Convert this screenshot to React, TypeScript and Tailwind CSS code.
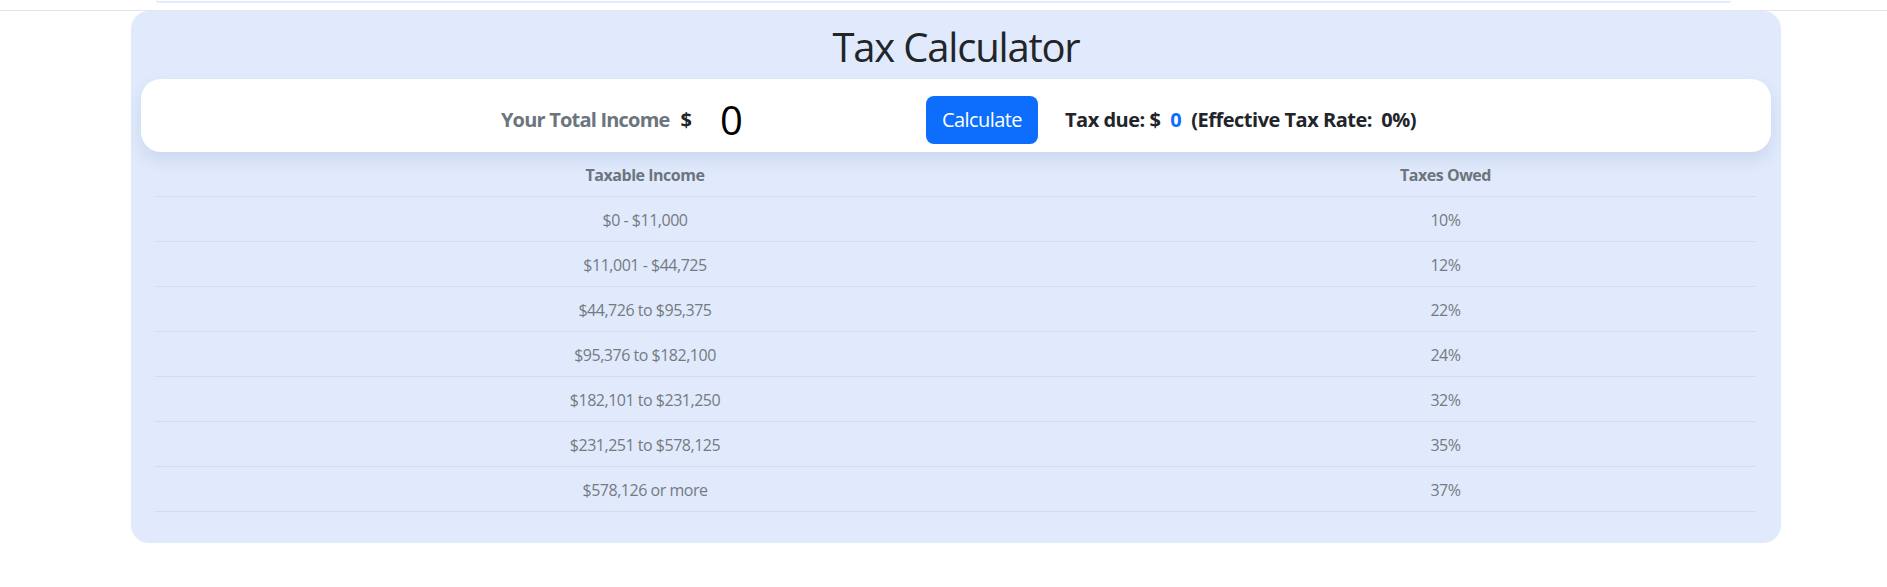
import React, { useState } from 'react';

const brackets: { range: string; rate: number; from: number; to: number }[] = [
  { range: '$0 - $11,000', rate: 10, from: 0, to: 11000 },
  { range: '$11,001 - $44,725', rate: 12, from: 11000, to: 44725 },
  { range: '$44,726 to $95,375', rate: 22, from: 44725, to: 95375 },
  { range: '$95,376 to $182,100', rate: 24, from: 95375, to: 182100 },
  { range: '$182,101 to $231,250', rate: 32, from: 182100, to: 231250 },
  { range: '$231,251 to $578,125', rate: 35, from: 231250, to: 578125 },
  { range: '$578,126 or more', rate: 37, from: 578125, to: Infinity },
];

const font = { fontFamily: '"Open Sans", "Noto Sans", sans-serif' };

function computeTax(income: number) {
  let tax = 0;
  for (const b of brackets) {
    if (income > b.from) {
      tax += (Math.min(income, b.to) - b.from) * (b.rate / 100);
    }
  }
  return Math.round(tax);
}

export default function App() {
  const [income, setIncome] = useState('0');
  const [taxDue, setTaxDue] = useState(0);
  const [rate, setRate] = useState(0);

  const handleCalculate = () => {
    const value = Number(income) || 0;
    const tax = computeTax(value);
    setTaxDue(tax);
    setRate(value > 0 ? Math.round((tax / value) * 10000) / 100 : 0);
  };

  return (
    <div className="min-h-[587px] bg-white" style={font}>
      <div className="mx-[156px] h-[3px] rounded-b-md border-b-2 border-[#e3eaf8] bg-white" />
      <div className="mt-[7px] border-t border-[#e3e5e8]" />

      <div className="ml-[131px] w-[1650px] rounded-[18px] bg-[#e0eafc] pt-[12px] pb-[31px]">
        <h1 className="mb-[8px] h-[48px] text-center text-[40px] leading-[48px] font-normal tracking-[-0.03em] text-[#212529]">
          Tax Calculator
        </h1>

        <div className="mx-[10px] flex items-center justify-center rounded-[20px] bg-white pt-[17px] pb-[8px] shadow-[0_0.5rem_1rem_rgba(60,80,140,0.12)]">
          <span className="ml-[5px] text-[20px] leading-[30px] font-bold tracking-[-0.04em] text-[#6c757d]">
            Your Total Income
          </span>
          <span className="ml-[11px] text-[20px] leading-[30px] font-bold text-[#212529]">$</span>
          <input
            value={income}
            onChange={(e) => setIncome(e.target.value)}
            className="ml-[16px] h-[48px] w-[206px] border-0 bg-transparent pl-[12px] text-[40px] leading-[48px] text-black outline-none"
          />
          <button
            onClick={handleCalculate}
            className="ml-[12px] h-[48px] w-[112px] rounded-lg bg-[#0d6efd] text-[20px] leading-[30px] tracking-[-0.03em] text-white"
          >
            Calculate
          </button>
          <span className="ml-[27px] text-[20px] leading-[30px] font-bold tracking-[-0.025em] text-[#212529] whitespace-pre">
            Tax due: $
            <span className="mr-[10px] ml-[10px] text-[#0d6efd]">{taxDue}</span>
            {`(Effective Tax Rate:  ${rate}%)`}
          </span>
        </div>

        <div className="mr-[25px] ml-[24px]">
          <table className="w-full border-separate border-spacing-0 text-center text-[16px] leading-6">
            <colgroup>
              <col className="w-[980px]" />
              <col />
            </colgroup>
            <thead>
              <tr>
                <th className="border-b border-[#d6dce6] pt-[11px] pb-[9px] font-bold tracking-[-0.03em] text-[#6c757d]">
                  Taxable Income
                </th>
                <th className="border-b border-[#d6dce6] pt-[11px] pb-[9px] font-bold tracking-[-0.03em] text-[#6c757d]">
                  Taxes Owed
                </th>
              </tr>
            </thead>
            <tbody>
              {brackets.map((b) => (
                <tr key={b.range}>
                  <td className="border-b border-[#d6dce6] pt-[11px] pb-[9px] tracking-[-0.03em] text-[#747a81]">{b.range}</td>
                  <td className="border-b border-[#d6dce6] pt-[11px] pb-[9px] tracking-[-0.03em] text-[#747a81]">{b.rate}%</td>
                </tr>
              ))}
            </tbody>
          </table>
        </div>
      </div>
    </div>
  );
}
